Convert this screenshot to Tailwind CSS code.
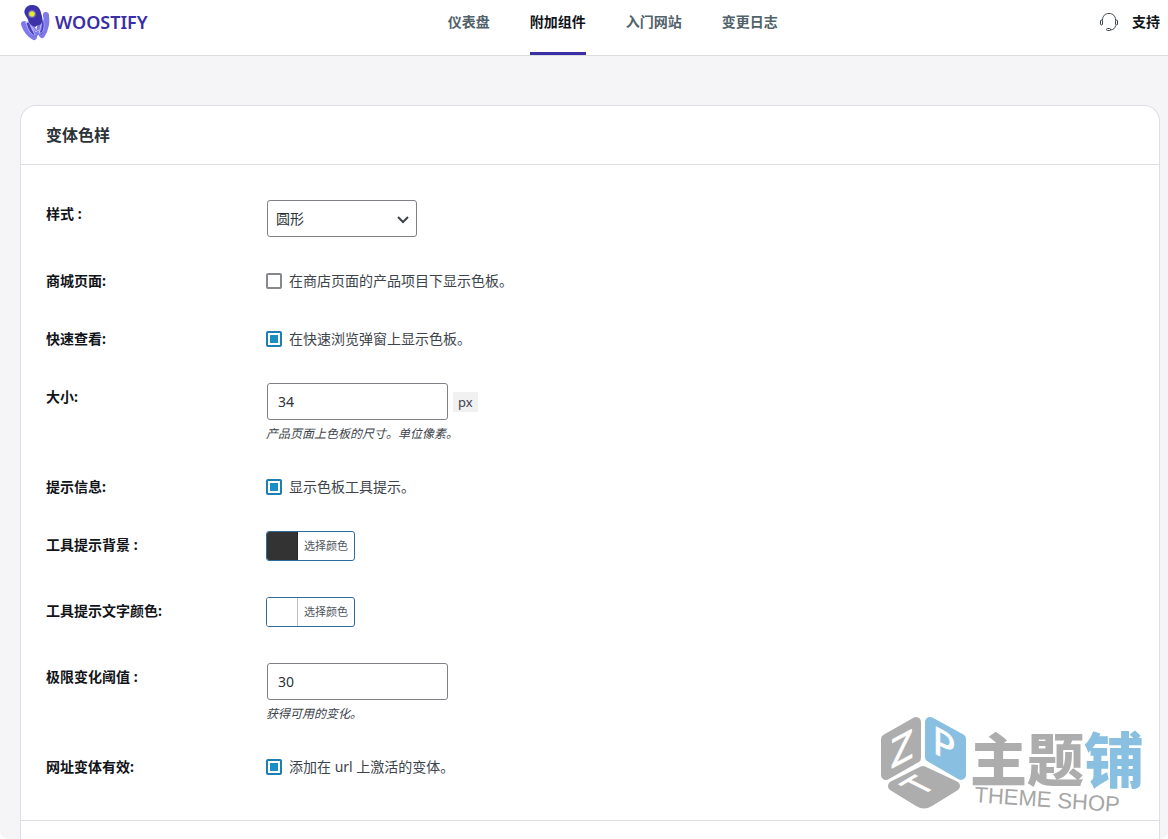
<!DOCTYPE html>
<html lang="zh-CN">
<head>
<meta charset="utf-8">
<meta name="viewport" content="width=device-width, initial-scale=1">
<title>Woostify - 变体色样</title>
<script src="https://cdn.jsdelivr.net/npm/@tailwindcss/browser@4"></script>
</head>
<body class="bg-white font-['Noto_Sans','Noto_Sans_CJK_SC',sans-serif] text-sm text-[#3c434a]">
<div class="relative flex h-screen flex-col overflow-hidden rounded-b-lg bg-[#f5f5f8]">
  <header class="flex h-14 shrink-0 items-stretch border-b border-[#dcdde1] bg-white pr-2 pl-5">
    <a href="#" class="flex items-center gap-1 pb-[11px] text-lg font-semibold text-[#3a2fa5]">
      <svg class="h-10 w-[31px]" viewBox="0 0 31 40" fill="none" stroke-linecap="round" aria-hidden="true">
        <g stroke="#7f79ec" stroke-width="6">
          <path d="M4 22C6 28 9 32 14 35"/>
          <path d="M26 13C27 20 26 27 22 33"/>
          <path d="M10 22L15 32M21 20L19 30"/>
        </g>
        <g stroke="#4a41bd" stroke-width="2.500">
          <path d="M8 22C9 26 11 30 14 33"/>
          <path d="M23 19C24 24 23 28 21 31"/>
        </g>
        <g stroke="#cbc8fb" stroke-width=".8">
          <path d="M6 20C8 19 10 21 11 24L15 33C13 35 7 28 6 20Z"/>
          <path d="M23 16C21 20 21 25 19 31C23 33 26 24 23 16Z"/>
          <path d="M12 25L16 30L18 28L20 30"/>
        </g>
        <path d="M9 3.500C14 2 19 4 20.500 9C21.500 13 23 16 22 20C21 24 18 22 15.500 25C12 24 9 22 8.500 19C8 16 5 14 4.500 11C4 8 6 4.500 9 3.500Z" fill="#3d32a8"/>
        <circle cx="12" cy="12" r="4" fill="#6560c9"/>
        <circle cx="12" cy="12" r="2.800" fill="#e3ee28"/>
      </svg>
      <span>WOOSTIFY</span>
    </a>
    <nav class="flex flex-1 justify-center gap-10 pr-[22px] font-semibold text-[#50626b]">
      <a href="#" class="border-b-3 border-transparent pt-3">仪表盘</a>
      <a href="#" aria-current="page" class="border-b-3 border-[#3a2fa5] pt-3 text-[#111418]">附加组件</a>
      <a href="#" class="border-b-3 border-transparent pt-3">入门网站</a>
      <a href="#" class="border-b-3 border-transparent pt-3">变更日志</a>
    </nav>
    <a href="#" class="flex items-center gap-3 pb-3 font-bold text-[#111418]">
      <svg class="h-5 w-5" viewBox="0 0 20 20" fill="none" stroke="#3c434a" stroke-width="1" aria-hidden="true">
        <path d="M2.500 8C2.500 4 5 1.500 9 1.500S15.500 4 15.500 8M15.500 13.500C15.500 16 13 18 10.500 18"/>
        <rect x=".5" y="8" width="2" height="5" rx="1"/>
        <rect x="15.500" y="8" width="2" height="5" rx="1"/>
        <rect x="6.500" y="16.500" width="4" height="2" rx="1"/>
      </svg>
      <span>支持</span>
    </a>
  </header>

  <main class="flex min-h-0 flex-1 flex-col pt-[49px] pr-2 pl-5">
    <section class="flex flex-1 flex-col rounded-t-2xl border border-b-0 border-[#dcdfe4] bg-white">
      <h2 class="border-b border-[#dcdfe4] px-[25px] py-[17px] text-base leading-6 font-semibold text-[#2c3338]">变体色样</h2>
      <form class="flex flex-col gap-[30px] border-b border-[#dcdfe4] px-[25px] pt-[35px] pb-[39px]">
        <div class="flex items-start">
          <label for="style" class="w-[221px] shrink-0 leading-7 font-bold text-[#111418]">样式 :</label>
          <div class="relative w-[150px]">
            <select id="style" class="h-[37px] w-full appearance-none rounded-[3px] border border-[#7e8287] bg-white px-2 text-[#2c3338]"><option>圆形</option></select>
            <svg class="pointer-events-none absolute top-3 right-2 h-4 w-3" viewBox="0 0 12 16" fill="none" stroke="#3c434a" stroke-width="2" aria-hidden="true"><path d="M1 5L6 10L11 5"/></svg>
          </div>
        </div>

        <div class="flex items-start">
          <label for="shop" class="w-[220px] shrink-0 leading-7 font-bold text-[#111418]">商城页面:</label>
          <label class="flex items-center gap-[7px] leading-7"><input id="shop" type="checkbox" class="h-4 w-4 appearance-none rounded-[2px] border-2 border-[#85888c] checked:border-[#1b7fb5] checked:bg-[#1b8fc4] checked:shadow-[inset_0_0_0_2px_white]">在商店页面的产品项目下显示色板。</label>
        </div>

        <div class="flex items-start">
          <label for="quick" class="w-[220px] shrink-0 leading-7 font-bold text-[#111418]">快速查看:</label>
          <label class="flex items-center gap-[7px] leading-7"><input id="quick" type="checkbox" checked class="h-4 w-4 appearance-none rounded-[2px] border-2 border-[#85888c] checked:border-[#1b7fb5] checked:bg-[#1b8fc4] checked:shadow-[inset_0_0_0_2px_white]">在快速浏览弹窗上显示色板。</label>
        </div>

        <div class="flex items-start">
          <label for="size" class="w-[220px] shrink-0 leading-7 font-bold text-[#111418]">大小:</label>
          <div>
            <div class="flex items-center gap-[5px] pl-px">
              <input id="size" type="text" value="34" class="h-[37px] w-[181px] rounded-[3px] border border-[#7e8287] bg-white px-2.5 text-[#2c3338]">
              <span class="bg-[#f1f1f2] px-[5px] text-[13px] leading-5">px</span>
            </div>
            <p class="pt-1 text-xs leading-[19px] italic">产品页面上色板的尺寸。单位像素。</p>
          </div>
        </div>

        <div class="flex items-start">
          <label for="tip" class="w-[220px] shrink-0 leading-7 font-bold text-[#111418]">提示信息:</label>
          <label class="flex items-center gap-[7px] leading-7"><input id="tip" type="checkbox" checked class="h-4 w-4 appearance-none rounded-[2px] border-2 border-[#85888c] checked:border-[#1b7fb5] checked:bg-[#1b8fc4] checked:shadow-[inset_0_0_0_2px_white]">显示色板工具提示。</label>
        </div>

        <div class="flex items-start pb-1.5">
          <label for="tipbg" class="h-[30px] w-[220px] shrink-0 leading-7 font-bold text-[#111418]">工具提示背景 :</label>
          <button id="tipbg" type="button" class="flex h-[30px] overflow-hidden rounded-[3px] border border-[#2e6c9b] bg-white text-[11px] leading-7 text-[#50575e]"><span class="w-[31px] self-stretch border-r border-[#292929] bg-[#333333]"></span><span class="px-1.5">选择颜色</span></button>
        </div>

        <div class="flex items-start pb-1.5">
          <label for="tipfg" class="h-[30px] w-[220px] shrink-0 leading-7 font-bold text-[#111418]">工具提示文字颜色:</label>
          <button id="tipfg" type="button" class="flex h-[30px] overflow-hidden rounded-[3px] border border-[#2e6c9b] bg-white text-[11px] leading-7 text-[#50575e]"><span class="w-[31px] self-stretch border-r border-[#b9bcc0] bg-white"></span><span class="px-1.5">选择颜色</span></button>
        </div>

        <div class="flex items-start">
          <label for="limit" class="w-[220px] shrink-0 leading-7 font-bold text-[#111418]">极限变化阈值 :</label>
          <div>
            <div class="pl-px">
              <input id="limit" type="text" value="30" class="block h-[37px] w-[181px] rounded-[3px] border border-[#7e8287] bg-white px-2.5 text-[#2c3338]">
            </div>
            <p class="pt-1 text-xs leading-[19px] italic">获得可用的变化。</p>
          </div>
        </div>

        <div class="flex items-start">
          <label for="url" class="w-[220px] shrink-0 leading-7 font-bold text-[#111418]">网址变体有效:</label>
          <label class="flex items-center gap-[7px] leading-7"><input id="url" type="checkbox" checked class="h-4 w-4 appearance-none rounded-[2px] border-2 border-[#85888c] checked:border-[#1b7fb5] checked:bg-[#1b8fc4] checked:shadow-[inset_0_0_0_2px_white]">添加在 url 上激活的变体。</label>
        </div>
      </form>
    </section>
  </main>

  <svg class="pointer-events-none absolute right-5 bottom-[22px] h-[104px] w-[272px] overflow-visible" viewBox="0 0 272 104" role="img" aria-label="主题铺 THEME SHOP">
    <g stroke-width="10" stroke-linejoin="round">
      <path d="M10 26L40 9V45L10 62Z" fill="#adadad" stroke="#adadad"/>
      <path d="M54 9L85 26V62L54 44Z" fill="#89c0e1" stroke="#89c0e1"/>
      <path d="M47 58L79 73L53 89Q48 92 43 89L17 73Z" fill="#adadad" stroke="#adadad"/>
    </g>
    <g fill="#fff" stroke="#fff" stroke-width=".8" font-family="Noto Sans, sans-serif" font-weight="400" text-anchor="middle">
      <text font-size="40" transform="translate(26 50) skewY(-28)">Z</text>
      <text font-size="38" transform="translate(68 45) skewY(28)">P</text>
      <text font-size="36" y="13" transform="matrix(.84 -.5 .88 .44 42 72)">T</text>
    </g>
    <g font-family="Noto Sans CJK SC, sans-serif" font-weight="900">
      <text x="94" y="68" font-size="57" fill="#adadad">主题</text>
      <text x="208" y="70" font-size="60" fill="#89c0e1">铺</text>
    </g>
    <text font-family="Liberation Sans, sans-serif" font-size="22" fill="#a6a6a6" transform="translate(98 89) rotate(4)">THEME SHOP</text>
  </svg>
</div>
</body>
</html>
